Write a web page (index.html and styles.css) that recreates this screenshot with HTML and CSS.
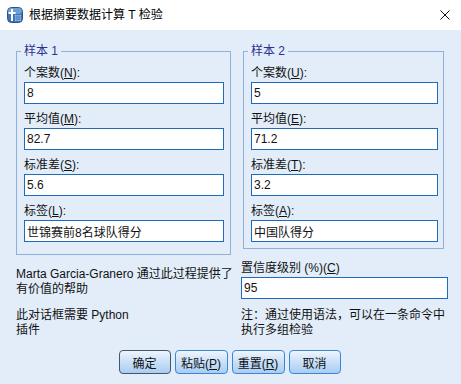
FILE: index.html
```html
<!DOCTYPE html>
<html lang="zh">
<head>
    <meta charset="UTF-8">
    <title>根据摘要数据计算 T 检验</title>
    <link rel="stylesheet" href="styles.css">
</head>
<body>
    <div class="titlebar">
        <svg class="app_icon" width="16" height="16" viewBox="0 0 16 16">
            <rect x="0.5" y="0.5" width="15" height="15" rx="4" fill="#3f74b8" stroke="#27548f"/>
            <rect x="1" y="1" width="14" height="6" rx="3" fill="#6d9fd6"/>
            <rect x="4" y="2" width="2" height="12" fill="#fff"/>
            <rect x="1.5" y="5" width="7" height="2" fill="#fff"/>
            <rect x="8" y="8" width="6" height="6" fill="#9fc4ec"/>
            <path d="M8 10h6M8 12h6M10 8v6M12 8v6" stroke="#3f74b8" stroke-width="0.8"/>
        </svg>
        <span class="titulo">根据摘要数据计算 T 检验</span>
        <svg class="cerrar" width="10" height="10" viewBox="0 0 10 10">
            <path d="M0.5 0.5L9.5 9.5M9.5 0.5L0.5 9.5" stroke="#111" stroke-width="1"/>
        </svg>
    </div>

    <div class="dialogo">
        <div class="muestras">
            <!-- Muestra 1 -->
            <fieldset class="muestra muestra_1">
                <legend>样本 1</legend>
                <label class="etiqueta">个案数(<u>N</u>):</label>
                <input class="caja" value="8">
                <label class="etiqueta">平均值(<u>M</u>):</label>
                <input class="caja" value="82.7">
                <label class="etiqueta">标准差(<u>S</u>):</label>
                <input class="caja" value="5.6">
                <label class="etiqueta">标签(<u>L</u>):</label>
                <input class="caja" value="世锦赛前8名球队得分">
            </fieldset>

            <!-- Muestra 2 -->
            <fieldset class="muestra muestra_2">
                <legend>样本 2</legend>
                <label class="etiqueta">个案数(<u>U</u>):</label>
                <input class="caja" value="5">
                <label class="etiqueta">平均值(<u>E</u>):</label>
                <input class="caja" value="71.2">
                <label class="etiqueta">标准差(<u>T</u>):</label>
                <input class="caja" value="3.2">
                <label class="etiqueta">标签(<u>A</u>):</label>
                <input class="caja" value="中国队得分">
            </fieldset>
        </div>

        <div class="inferior">
            <div class="notas">
                <p>Marta Garcia-Granero 通过此过程提供了<br>有价值的帮助</p>
                <p class="nota_2">此对话框需要 Python<br>插件</p>
            </div>
            <div class="confianza">
                <label class="etiqueta">置信度级别 (%)(<u>C</u>)</label>
                <input class="caja" value="95">
                <p class="nota_2">注：通过使用语法，可以在一条命令中<br>执行多组检验</p>
            </div>
        </div>

        <div class="botones">
            <button class="boton boton_defecto">确定</button>
            <button class="boton boton_ancho">粘贴(<u>P</u>)</button>
            <button class="boton boton_ancho">重置(<u>R</u>)</button>
            <button class="boton">取消</button>
        </div>
    </div>
</body>
</html>
```

FILE: styles.css
```css
html, body {
    margin: 0;
    padding: 0;
    width: 100%;
    height: 100%;
    background-color: #e2edf9;
    font-family: "Liberation Sans", "Noto Sans CJK SC", sans-serif;
    font-size: 12px;
    color: #111;
}

.titlebar {
    height: 30px;
    background-color: #fff;
    display: flex;
    align-items: center;
    padding-left: 7px;
    padding-right: 11px;
}

.app_icon {
    display: block;
    margin-right: 6px;
}

.titulo {
    flex: 1;
    font-size: 12px;
    line-height: 16px;
    color: #000;
}

.cerrar {
    display: block;
}

.dialogo {
    padding: 14px 0 0 16px;
}

.muestras {
    display: flex;
    align-items: flex-start;
    gap: 12px;
}

.muestra {
    margin: 0;
    border: 1px solid #8fb0d8;
    display: flex;
    flex-direction: column;
    padding-top: 8px;
    padding-left: 7px;
}

.muestra legend {
    color: #2e3192;
    line-height: 14px;
    padding: 0 3px;
    margin-left: -3px;
}

.muestra_1 {
    width: 215px;
    box-sizing: border-box;
    padding-right: 6px;
    padding-bottom: 12px;
}

.muestra_2 {
    width: 201px;
    box-sizing: border-box;
    padding-right: 5px;
    padding-bottom: 6px;
}

.etiqueta {
    display: block;
    line-height: 14px;
    margin-bottom: 2px;
}

.etiqueta u {
    text-underline-offset: 1px;
}

.caja {
    display: block;
    box-sizing: border-box;
    width: 100%;
    height: 22px;
    margin: 0 0 8px 0;
    padding: 0 2px;
    border: 1px solid #1e6bb8;
    background-color: #fff;
    font-family: "Liberation Sans", "Noto Sans CJK SC", sans-serif;
    font-size: 12px;
    color: #111;
    outline: none;
}

.muestra .caja:last-child {
    margin-bottom: 0;
}

.inferior {
    display: flex;
    margin-top: 6px;
}

.notas {
    width: 225px;
    padding-top: 6px;
}

.notas p, .confianza p {
    margin: 0;
    line-height: 15px;
}

.notas .nota_2 {
    margin-top: 11px;
}

.confianza {
    width: 207px;
    white-space: nowrap;
}

.confianza .caja {
    margin-bottom: 0;
}

.confianza .nota_2 {
    margin-top: 9px;
}

.botones {
    display: flex;
    justify-content: center;
    gap: 4px;
    margin-top: 12px;
    margin-left: -16px;
    padding-right: 2px;
}

.boton {
    width: 52px;
    height: 24px;
    padding: 0;
    border: 1px solid #3d86d6;
    border-radius: 4px;
    background: linear-gradient(#eef5fd, #c9e0f8 50%, #a9cdf3);
    font-family: "Liberation Sans", "Noto Sans CJK SC", sans-serif;
    font-size: 12px;
    color: #111;
}

.boton_ancho {
    width: 53px;
}

.boton_defecto {
    border-color: #45556a;
}
```
